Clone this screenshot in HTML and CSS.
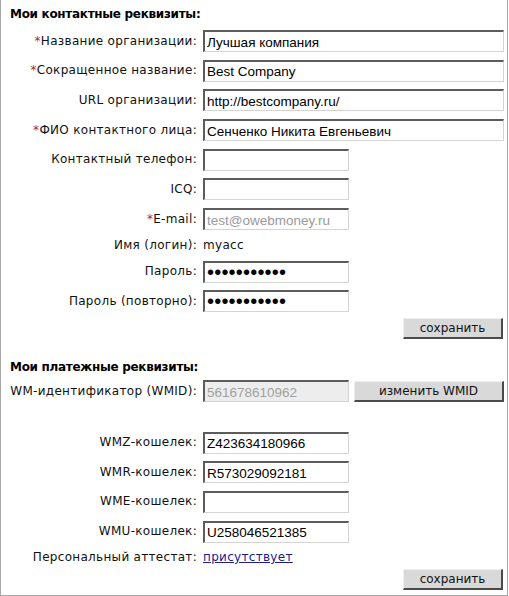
FILE: index.html
```html
<!DOCTYPE html>
<html lang="ru">
<head>
<meta charset="utf-8">
<title>Реквизиты</title>
<link rel="stylesheet" href="styles.css">
</head>
<body>
<div class="panel">
  <h2 class="heading first">Мои контактные реквизиты:</h2>
  <div class="form">
    <label class="lbl"><span class="req">*</span>Название организации:</label>
    <input class="inp wide" type="text" value="Лучшая компания">
    <label class="lbl"><span class="req">*</span>Сокращенное название:</label>
    <input class="inp wide" type="text" value="Best Company">
    <label class="lbl">URL организации:</label>
    <input class="inp wide" type="text" value="http://bestcompany.ru/">
    <label class="lbl"><span class="req">*</span>ФИО контактного лица:</label>
    <input class="inp wide" type="text" value="Сенченко Никита Евгеньевич">
    <label class="lbl">Контактный телефон:</label>
    <input class="inp" type="text" value="">
    <label class="lbl">ICQ:</label>
    <input class="inp" type="text" value="">
    <label class="lbl"><span class="req">*</span>E-mail:</label>
    <input class="inp muted" type="text" value="test@owebmoney.ru" readonly>
    <span class="lbl short">Имя (логин):</span>
    <span class="val short">myacc</span>
    <label class="lbl">Пароль:</label>
    <input class="inp pwd" type="password" value="secretpass1">
    <label class="lbl">Пароль (повторно):</label>
    <input class="inp pwd" type="password" value="secretpass1">
  </div>
  <div class="actions first-actions"><button class="btn save" type="button">сохранить</button></div>

  <h2 class="heading second">Мои платежные реквизиты:</h2>
  <div class="form">
    <label class="lbl">WM-идентификатор (WMID):</label>
    <div class="inline">
      <input class="inp disabled" type="text" value="561678610962" disabled>
      <button class="btn change" type="button">изменить WMID</button>
    </div>
    <div class="spacer"></div>
    <label class="lbl">WMZ-кошелек:</label>
    <input class="inp" type="text" value="Z423634180966">
    <label class="lbl">WMR-кошелек:</label>
    <input class="inp" type="text" value="R573029092181">
    <label class="lbl">WME-кошелек:</label>
    <input class="inp" type="text" value="">
    <label class="lbl">WMU-кошелек:</label>
    <input class="inp" type="text" value="U258046521385">
    <span class="lbl short">Персональный аттестат:</span>
    <span class="val short"><a class="link" href="#">присутствует</a></span>
  </div>
  <div class="actions second-actions"><button class="btn save" type="button">сохранить</button></div>
</div>
</body>
</html>
```

FILE: styles.css
```css
* { box-sizing: border-box; }
html, body { margin: 0; padding: 0; background: #fff; }
body {
  font-family: "DejaVu Sans", Verdana, sans-serif;
  font-size: 12px;
  color: #111;
}
.panel {
  width: 508px;
  height: 596px;
  border-left: 1px solid #a6a6a6;
  border-right: 1px solid #a6a6a6;
  border-bottom: 1px solid #a6a6a6;
  padding: 0 4px 0 0;
}
.heading {
  margin: 0;
  font-size: 12px;
  font-weight: bold;
  line-height: 14px;
  letter-spacing: -0.3px;
  padding-left: 9px;
  color: #000;
}
.heading.first { padding-top: 7px; margin-bottom: 9px; }
.heading.second { margin-top: 21px; margin-bottom: 6px; }
.form {
  display: grid;
  grid-template-columns: 196px 1fr;
  column-gap: 6px;
  row-gap: 7.7px;
  align-items: center;
}
.lbl {
  text-align: right;
  white-space: nowrap;
  line-height: 15px;
  letter-spacing: 0.3px;
}
.req { color: #b3262b; }
.val { line-height: 15px; letter-spacing: 0.3px; }
.short { height: 15px; }
.inp {
  height: 22px;
  width: 146px;
  margin: 0;
  padding: 1px 2px 0 2px;
  font-family: "Liberation Sans", Arial, sans-serif;
  font-size: 13.5px;
  color: #000;
  background: #fff;
  border-top: 2px solid #5c5c5c;
  border-left: 2px solid #5c5c5c;
  border-bottom: 1px solid #d4d4d4;
  border-right: 1px solid #d4d4d4;
  border-radius: 0;
  outline: none;
}
.inp.wide { width: 301px; }
.inp.muted { color: #9a9a9a; }
.inp.disabled { background: #ededed; color: #a0a0a0; }
.inp.pwd { font-size: 20px; letter-spacing: 0.2px; padding-top: 0; }
.inline { display: flex; gap: 5px; align-items: flex-start; }
.spacer { grid-column: 1 / -1; height: 14px; }
.btn {
  margin: 0;
  height: 21px;
  padding: 0 0 1px 0;
  font-family: "DejaVu Sans", Verdana, sans-serif;
  font-size: 12px;
  color: #111;
  background: #d9d9d9;
  border-top: 1px solid #efefef;
  border-left: 1px solid #efefef;
  border-right: 2px solid #4a4a4a;
  border-bottom: 2px solid #4a4a4a;
  border-radius: 0;
}
.btn.save { width: 100px; }
.btn.change { width: 150px; margin-top: 1px; }
.actions { display: flex; justify-content: flex-end; }
.first-actions { margin-top: 6px; }
.second-actions { margin-top: 4px; }
.link { color: #1c1c8e; text-decoration: underline; }
```
